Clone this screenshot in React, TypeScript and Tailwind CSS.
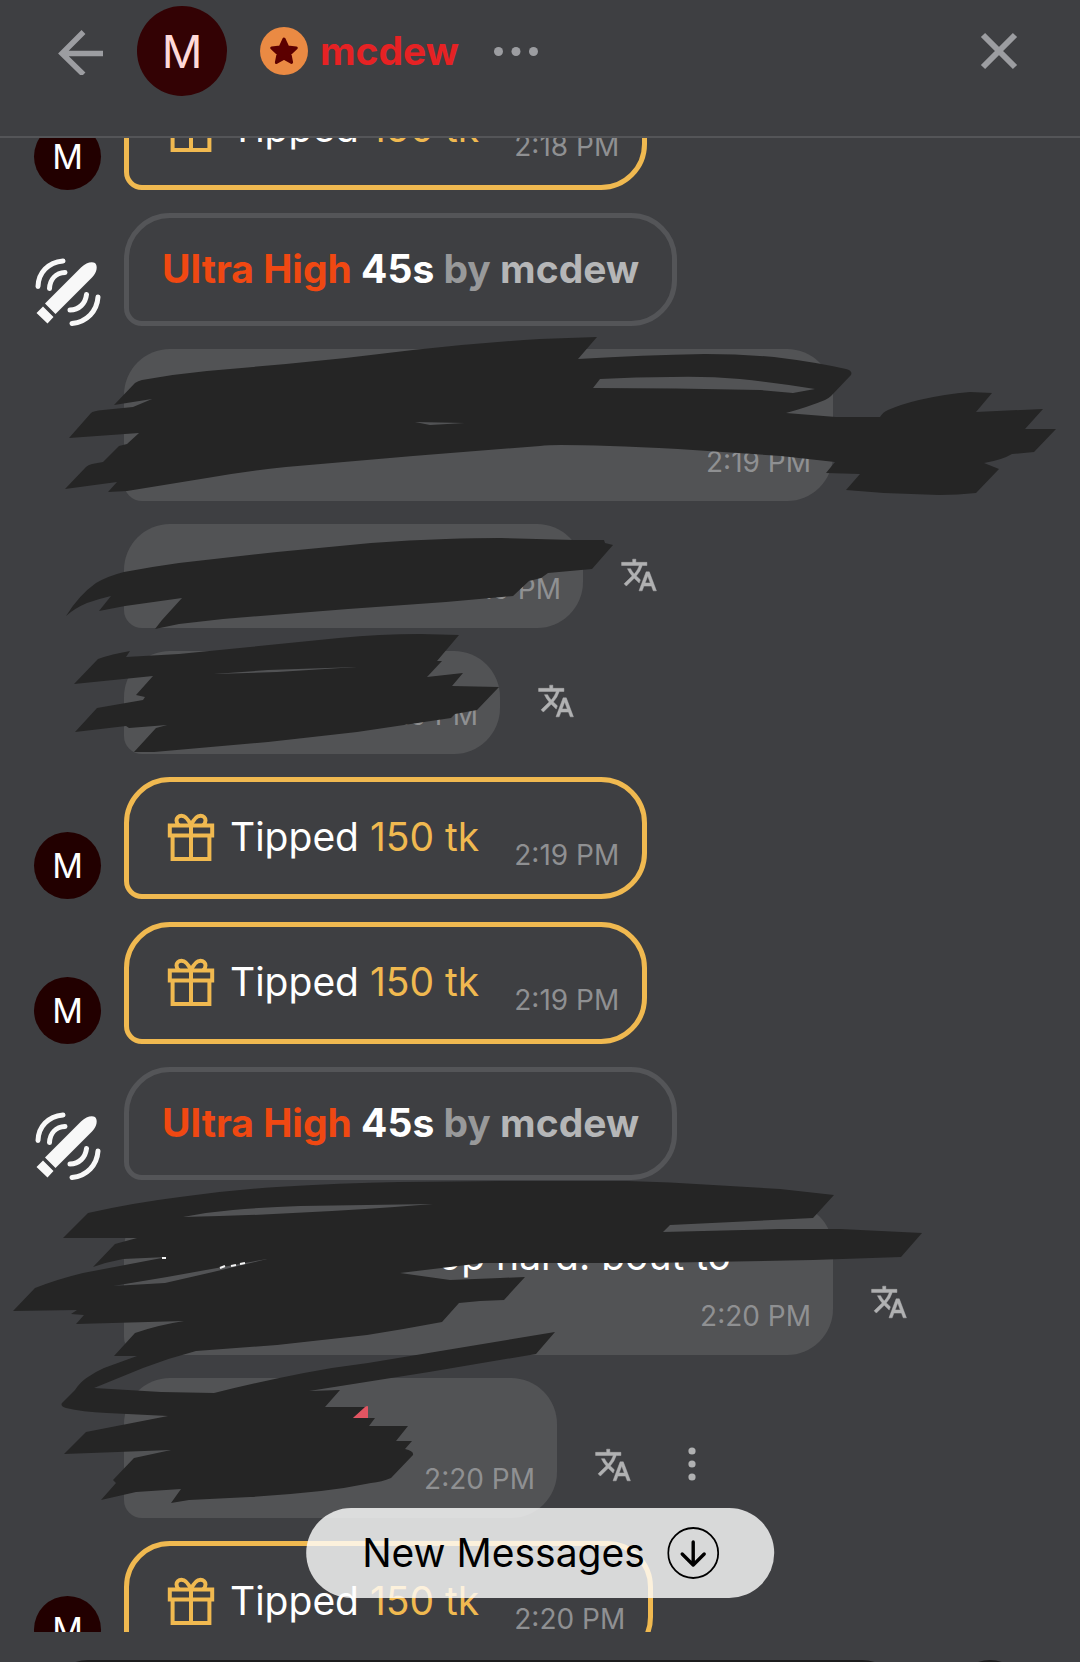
import { ReactNode } from "react";

type Message =
  | { id: number; kind: "tip"; amount: string; time: string }
  | { id: number; kind: "toy"; level: string; duration: string; user: string }
  | {
      id: number;
      kind: "text";
      text?: string;
      time: string;
      size: string;
      actions: string[];
    };

const messages: Message[] = [
  { id: 1, kind: "tip", amount: "150 tk", time: "2:18 PM" },
  { id: 2, kind: "toy", level: "Ultra High", duration: "45s", user: "mcdew" },
  {
    id: 3,
    kind: "text",
    time: "2:19 PM",
    size: "w-[709px] min-h-[152px]",
    actions: [],
  },
  {
    id: 4,
    kind: "text",
    time: "2:19 PM",
    size: "w-[459px] min-h-[104px]",
    actions: ["translate"],
  },
  {
    id: 5,
    kind: "text",
    time: "2:19 PM",
    size: "w-[376px] min-h-[103px]",
    actions: ["translate"],
  },
  { id: 6, kind: "tip", amount: "150 tk", time: "2:19 PM" },
  { id: 7, kind: "tip", amount: "150 tk", time: "2:19 PM" },
  { id: 8, kind: "toy", level: "Ultra High", duration: "45s", user: "mcdew" },
  {
    id: 9,
    kind: "text",
    text: "op hard. bout to",
    time: "2:20 PM",
    size: "w-[709px] min-h-[152px]",
    actions: ["translate"],
  },
  {
    id: 10,
    kind: "text",
    time: "2:20 PM",
    size: "w-[433px] min-h-[140px]",
    actions: ["translate", "more"],
  },
  { id: 11, kind: "tip", amount: "150 tk", time: "2:20 PM" },
];

function GiftIcon() {
  return (
    <svg
      viewBox="0 0 48 48"
      className="size-12 shrink-0"
      fill="none"
      stroke="currentColor"
      strokeWidth="4"
      aria-hidden="true"
    >
      <path d="M2.800 12.500h42.400v10H2.800zM5.600 22.500h36.800v23.500H5.600zM24 12.500v34" />
      <path d="M24 12.500c-3-7-6-9.700-9.500-9.700-3 0-5 2-5 4.600 0 2 .8 3.600 2.500 5.100M24 12.500c3-7 6-9.700 9.500-9.700 3 0 5 2 5 4.600 0 2-.8 3.600-2.500 5.100" />
    </svg>
  );
}

function ToyIcon() {
  return (
    <svg
      viewBox="0 0 66 68"
      className="h-[68px] w-[66px]"
      fill="none"
      stroke="currentColor"
      strokeWidth="5"
      strokeLinecap="round"
      aria-hidden="true"
    >
      <path
        fill="currentColor"
        stroke="none"
        d="M10 45.500 46 9.500c5-5 11-6.500 14-4.500 3 3 2 9.500-3 14.500L20.500 56zM8 48.500l10.500 10.500-6 6.500L1.500 55z"
      />
      <path d="M3 28.500C3.500 14.500 13 4.500 28 3M14.500 30.500c.5-9.500 6.500-15.500 15.500-16M63 39c-1 14-11 25-26 26.500M51.500 36.500c-1 9-7.500 15.500-16.500 15.500" />
    </svg>
  );
}

function TranslateIcon() {
  return (
    <svg
      viewBox="0 0 24 24"
      className="size-[38px]"
      fill="currentColor"
      stroke="currentColor"
      strokeWidth="0.300"
      aria-hidden="true"
    >
      <path d="m12.870 15.070-2.540-2.510.030-.030A17.520 17.520 0 0 0 14.070 6H17V4h-7V2H8v2H1v1.990h11.170C11.500 7.920 10.440 9.750 9 11.350 8.070 10.320 7.300 9.190 6.690 8h-2c.730 1.630 1.730 3.170 2.980 4.560l-5.090 5.020L4 19l5-5 3.110 3.110zM18.500 10h-2L12 22h2l1.120-3h4.750L21 22h2zm-2.620 7 1.620-4.330L19.120 17z" />
    </svg>
  );
}

function Avatar() {
  return (
    <div className="flex size-[67px] shrink-0 items-center justify-center rounded-full bg-[#220000] text-[34px] leading-none text-white">
      M
    </div>
  );
}

function Time({ children }: { children: ReactNode }) {
  return (
    <time className="shrink-0 text-[28px] leading-[34px] text-[#8f9092]">
      {children}
    </time>
  );
}

function MessageRow({ message }: { message: Message }) {
  if (message.kind === "tip") {
    return (
      <li className="flex items-end gap-[23px]">
        <Avatar />
        <div className="flex items-end rounded-[46px] rounded-bl-[18px] border-[5px] border-[#f0b950] pt-[31px] pr-[23px] pb-[33px] pl-[38px]">
          <div className="flex items-center gap-[15px] text-[39px] leading-[48px] text-[#f0b950]">
            <GiftIcon />
            <p>
              <span className="text-white">Tipped</span> {message.amount}
            </p>
          </div>
          <div className="-mb-[11px] ml-[35px] flex">
            <Time>{message.time}</Time>
          </div>
        </div>
      </li>
    );
  }

  if (message.kind === "toy") {
    return (
      <li className="flex items-end gap-[23px]">
        <div className="flex w-[67px] shrink-0 justify-center text-[#f8f8f8]">
          <ToyIcon />
        </div>
        <p className="rounded-[46px] rounded-bl-[18px] border-[5px] border-[#545558] px-[33px] pt-[27px] pb-7 text-[39px] leading-[48px] font-bold text-[#98999a]">
          <span className="text-[#f04812]">{message.level}</span>{" "}
          <span className="text-white">{message.duration}</span> by{" "}
          <span className="text-[#b5b6b7]">{message.user}</span>
        </p>
      </li>
    );
  }

  return (
    <li className="flex items-end pl-[90px] text-[#b0b1b2]">
      <div
        className={`flex flex-col justify-between rounded-[46px] rounded-bl-[18px] bg-[#525355] pt-[29px] pr-[22px] pb-[22px] pl-9 ${message.size}`}
      >
        {message.text && (
          <p className="-mb-2 pr-20 text-right text-[39px] leading-[48px] text-white">
            {message.text}
          </p>
        )}
        <div className="mt-auto flex justify-end">
          <Time>{message.time}</Time>
        </div>
      </div>
      {message.actions.includes("translate") && (
        <button
          type="button"
          aria-label="Translate"
          className="mb-[34px] ml-[37px]"
        >
          <TranslateIcon />
        </button>
      )}
      {message.actions.includes("more") && (
        <button
          type="button"
          aria-label="Message options"
          className="mb-[34px] ml-10"
        >
          <svg viewBox="0 0 40 40" className="size-10" fill="currentColor">
            <circle cx="20" cy="7" r="3.600" />
            <circle cx="20" cy="20" r="3.600" />
            <circle cx="20" cy="33" r="3.600" />
          </svg>
        </button>
      )}
    </li>
  );
}

// Marker strokes drawn over the private messages
function MarkerStrokes() {
  return (
    <svg
      viewBox="0 0 1080 1662"
      className="pointer-events-none absolute top-0 left-0 h-[1662px] w-[1080px]"
      fill="#252525"
      fillRule="evenodd"
      aria-hidden="true"
    >
      <path
        d="M114 405 135 383Q138 381 142 380Q175 374 207 371L286 364Q350 358 413 350Q475 343 540 339L597 337 578 359Q643 355 705 354Q740 354 774 357Q815 362 846 369Q853 371 851 375L831 396Q829 398 825 400Q808 407 786 413L836 417H880Q883 412 888 410Q902 404 919 400Q945 394 970 392L992 393 976 412 1043 409 1025 429 1056 429 1034 452 1012 454Q1002 460 984 463L999 469 976 493Q958 495 939 495L884 493 846 490 860 474 826 473 835 462 781 456 678 449Q600 445 561 445Q548 445 540 446L413 456 286 467Q245 471 207 478L127 491 108 492 117 482 65 489 86 467Q88 465 92 464L103 462 119 446 127 444 139 433 69 438 91 413Q93 411 103 410L133 407 152 399z
        M600 379Q636 377 671 377Q706 376 740 379Q780 383 815 389L793 393 760 390Q676 388 593 388z
        M415 422 465 423 430 425z"
      />
      <path d="M66 616Q79 595 96 583Q108 576 124 572Q150 567 179 563L277 552 371 543Q410 540 446 539Q475 538 500 538L574 540 604 540 605 543 613 545 592 569 548 573 541 578 529 581 513 596 446 602 348 609 223 619 179 624 155 629 162 620 182 598 125 606 99 611 111 596Q98 599 87 603Q75 608 66 616z" />
      <path
        d="M74 684 98 659Q112 654 130 651L126 657 179 654 250 647 339 638Q380 634 420 634L459 635 437 661 442 661 427 677 463 673 452 686 499 687 477 710 455 714 451 718 357 732 268 742 154 752 134 752 156 728 167 725 129 728 126 726 75 732 97 708 143 700 145 697 136 695 153 676z
        M214 674 268 670 357 667 277 672z"
      />
      <path
        d="M63 1238 88 1213Q132 1203 180 1197Q228 1190 277 1187Q340 1183 400 1182L500 1181H627Q670 1182 713 1185L780 1189 834 1195 813 1218 670 1225 663 1232 780 1229 840 1229 922 1233 901 1257 813 1260 647 1263H483L400 1273 450 1280 500 1278 525 1277 504 1300 480 1301 459 1303 442 1322Q405 1329 367 1335L277 1345 196 1351Q169 1358 143 1368L94 1388 161 1392 214 1393Q258 1382 304 1373Q335 1367 368 1363L555 1332 536 1354 429 1372 309 1391 340 1390 325 1407 366 1407 353 1418 375 1418 369 1426 408 1426 396 1441 412 1441 405 1449Q414 1451 413 1455L391 1478Q382 1482 371 1483Q347 1488 321 1491Q285 1495 250 1497L189 1500 171 1503 181 1489 136 1492 101 1500 116 1483 113 1480 134 1458 171 1450 64 1454 86 1432 168 1416 107 1413Q82 1412 66 1408Q60 1406 62 1403L75 1390Q81 1381 88 1377Q95 1372 104 1368L137 1356 114 1356 135 1333Q158 1325 184 1321L76 1324 84 1315 71 1314 77 1310 13 1311 35 1288Q58 1279 83 1273L167 1257 123 1259Q107 1262 93 1267L115 1244 137 1238z
        M183 1217Q208 1212 233 1210Q267 1207 300 1206L433 1204Q360 1210 293 1213Q238 1216 183 1217z
        M113 1286 167 1277 267 1259 213 1272 165 1283z"
      />
      <path
        stroke="#f4f4f4"
        strokeWidth="2"
        d="M162 1258h4M220 1268l5-2M231 1266l5-1M240 1264l5-1"
      />
      <path fill="#e25562" d="m353 1418 12-11q3-2 3 0v11z" />
    </svg>
  );
}

export default function App() {
  return (
    <div className="relative flex h-screen flex-col overflow-hidden bg-[#3e3f42] font-['Inter','Liberation_Sans',sans-serif]">
      <header className="flex shrink-0 items-center border-b-2 border-[#545558] pt-1.5 pr-[61px] pb-10 pl-14 text-[#9c9da1]">
        <button type="button" aria-label="Back">
          <svg
            viewBox="0 0 48 48"
            className="size-12"
            fill="none"
            stroke="currentColor"
            strokeWidth="5.500"
          >
            <path d="M47 26.500H6M27.500 5 6 26.500l21.500 21" />
          </svg>
        </button>
        <div className="ml-[33px] flex size-[90px] items-center justify-center rounded-full bg-[#330204] text-[45px] leading-none text-[#ffd9d9]">
          M
        </div>
        <svg
          viewBox="0 0 48 48"
          className="ml-[33px] size-12"
          role="img"
          aria-label="Star member"
        >
          <circle cx="24" cy="24" r="24" fill="#ea8a43" />
          <path
            fill="#5c0000"
            stroke="#5c0000"
            strokeWidth="3"
            strokeLinejoin="round"
            d="m24 12 3.700 7.900 8.600 1-6.400 5.900 1.700 8.600-7.600-4.200-7.600 4.200 1.700-8.600-6.400-5.900 8.600-1z"
          />
        </svg>
        <h1 className="ml-3 text-[39px] leading-[48px] font-bold text-[#e62224]">
          mcdew
        </h1>
        <button type="button" aria-label="More" className="ml-[33px]">
          <svg viewBox="0 0 48 48" className="size-12" fill="currentColor">
            <circle cx="6.500" cy="24.500" r="4.500" />
            <circle cx="24" cy="24.500" r="4.500" />
            <circle cx="41.500" cy="24.500" r="4.500" />
          </svg>
        </button>
        <button type="button" aria-label="Close" className="ml-auto">
          <svg
            viewBox="0 0 40 40"
            className="size-10"
            fill="none"
            stroke="currentColor"
            strokeWidth="6"
          >
            <path d="m4 4 32 32M36 4 4 36" />
          </svg>
        </button>
      </header>

      <main className="flex-1 overflow-hidden">
        <ul className="-mt-[70px] flex flex-col gap-[23px] pl-[34px]">
          {messages.map((message) => (
            <MessageRow key={message.id} message={message} />
          ))}
        </ul>
      </main>

      <footer className="flex h-[30px] shrink-0 items-start gap-[52px] pt-7 pr-[54px] pl-12">
        <input
          aria-label="Message"
          className="h-24 flex-1 rounded-[40px] bg-[#1c1c1d] px-10 text-[39px] text-white"
        />
        <button
          type="button"
          aria-label="Send"
          className="size-[72px] shrink-0 rounded-full bg-[#1c1c1d]"
        />
      </footer>

      <MarkerStrokes />

      {/* Scroll to latest */}
      <button
        type="button"
        className="absolute bottom-16 left-1/2 flex h-[90px] -translate-x-1/2 items-center gap-[22px] rounded-full bg-white/80 pr-[55px] pl-14 text-[39px] leading-[48px] whitespace-nowrap text-black"
      >
        New Messages
        <svg
          viewBox="0 0 52 52"
          className="size-[52px]"
          fill="none"
          stroke="currentColor"
          strokeLinecap="round"
          strokeLinejoin="round"
          aria-hidden="true"
        >
          <circle cx="26" cy="26" r="25" strokeWidth="1.800" />
          <path strokeWidth="3.400" d="M26 15v22M15 27l11 11 11-11" />
        </svg>
      </button>
    </div>
  );
}
